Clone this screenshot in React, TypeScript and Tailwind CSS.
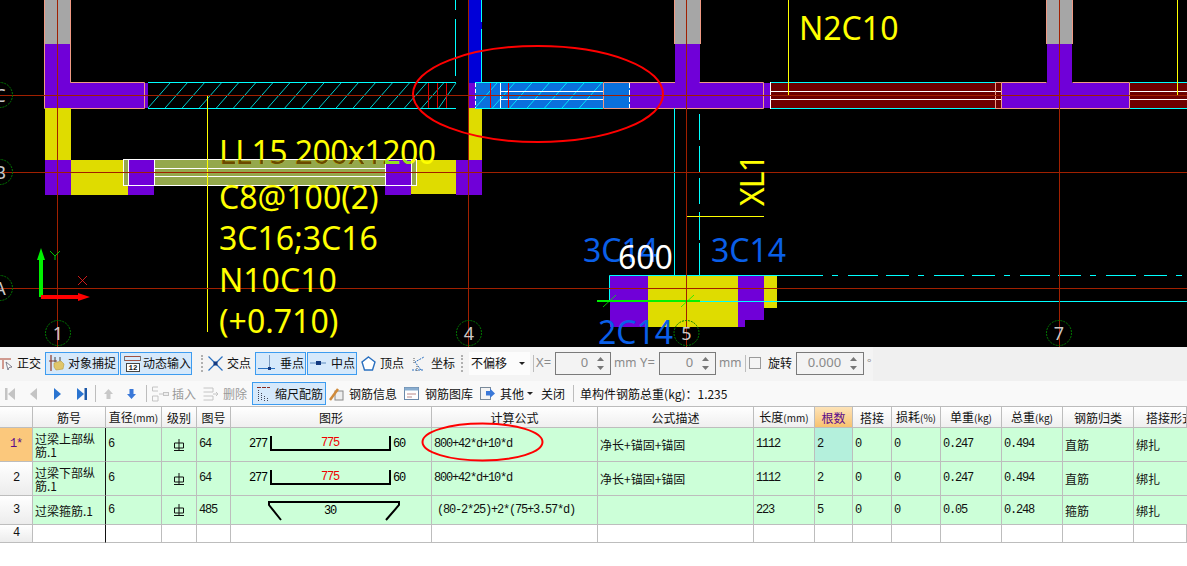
import React from 'react';

const CJK = '"Noto Sans CJK SC", "Noto Sans", sans-serif';
const RED = '#a02000';
const YELLOW = '#dfdc00';
const PURPLE = '#7000d8';
const SALMON = '#f09a84';
const CYAN = '#00ffff';
const MAROON = '#6e0000';

function range(start: number, end: number, step: number) {
  const out: number[] = [];
  for (let v = start; v < end; v += step) out.push(v);
  return out;
}

function AxisBubble({ cx, cy, label }: { cx: number; cy: number; label: string }) {
  return (
    <g>
      <circle cx={cx} cy={cy} r={12.5} fill="none" stroke="#007a00" strokeWidth={1} strokeDasharray="2 1" />
      <text x={cx} y={cy + 7} textAnchor="middle" fontSize={18} fill="#c8c8c8" fontFamily='"Noto Sans", sans-serif'>{label}</text>
    </g>
  );
}

function Column({ x, w }: { x: number; w: number }) {
  return (
    <g>
      <rect x={x} y={0} width={w} height={44} fill="#a6a6a6" />
      <rect x={x} y={44} width={w} height={40} fill={PURPLE} />
      <path d={`M${x - 0.5} 0V44M${x + w + 0.5} 0V44`} stroke={SALMON} fill="none" />
    </g>
  );
}

function Canvas() {
  const textFont = '"Noto Sans", sans-serif';
  const lines = ['C8@100(2)', '3C16;3C16', 'N10C10', '(+0.710)'];
  const baselines = [209, 250, 292, 333];
  return (
    <svg width={1187} height={347} viewBox="0 0 1187 347" className="block shrink-0">
      <rect width={1187} height={347} fill="#000" />
      <defs>
        <clipPath id="beamClip"><rect x={154} y={160} width={231} height={25} /></clipPath>
        <clipPath id="purpleClip"><rect x={385} y={160} width={26} height={6} /></clipPath>
      </defs>

      {/* column 1 and the wall under it */}
      <rect x={45} y={0} width={26} height={44} fill="#a6a6a6" />
      <rect x={45} y={44} width={26} height={64} fill={PURPLE} />
      <rect x={71} y={83} width={74} height={25} fill={PURPLE} />
      <path d="M44.5 0V108.5H144.5V82.5H70.5V0" fill="none" stroke={SALMON} />
      <rect x={145} y={83} width={3} height={25} fill={PURPLE} />
      <rect x={45} y={108} width={26} height={52} fill={YELLOW} />
      <rect x={45} y={160} width={26} height={35} fill={PURPLE} />
      <rect x={71} y={160} width={57} height={35} fill={YELLOW} />
      <rect x={128} y={160} width={26} height={35} fill={PURPLE} />
      <rect x={385} y={160} width={26} height={35} fill={PURPLE} />
      <rect x={411} y={160} width={45} height={34} fill={YELLOW} />
      <rect x={456} y={160} width={26} height={35} fill={PURPLE} />
      <rect x={469} y={108} width={13} height={52} fill={YELLOW} />

      {/* LL15 beam */}
      <rect x={124} y={160} width={4} height={25} fill="#94a84c" />
      <rect x={154} y={160} width={231} height={25} fill="#94a84c" />
      <rect x={411} y={160} width={6} height={25} fill="#94a84c" />
      <rect x={123.5} y={159.5} width={293} height={26} fill="none" stroke="#fff" />
      <path d="M128.5 160V185M154.5 160V185M385.5 160V185M411.5 160V185M154 168.5H385M154 176.5H385" stroke="#fff" />

      {/* hatched beam, column C */}
      <path d="M148 82.5H456M148 108.5H456" stroke={CYAN} />
      {range(148, 440, 17.1).map((x) => (
        <line key={x} x1={x} y1={108} x2={Math.min(x + 22, 456)} y2={83} stroke={CYAN} strokeWidth={0.8} />
      ))}
      <path d="M455.5 0V10M455.5 19V76" stroke={CYAN} strokeWidth={1} />
      <rect x={469} y={0} width={13} height={83} fill="#0000d8" />
      <path d="M481.5 0V22M481.5 29V83" stroke={CYAN} />
      <rect x={469} y={83} width={6} height={25} fill={PURPLE} />

      {/* selected beam */}
      <rect x={475} y={83} width={155} height={25} fill="#0a70dd" />
      <path d="M475 82.5H603M475 108.5H603" stroke={CYAN} />
      {range(475, 590, 17.4).map((x) => (
        <line key={x} x1={x} y1={108} x2={Math.min(x + 22, 603)} y2={83} stroke={CYAN} strokeWidth={0.8} />
      ))}
      <path d="M500.5 83V108M500 91.5H603M500 99.5H603" stroke="#fff" />
      <path d="M475.5 83V108" stroke="#fff" strokeDasharray="4 2" />
      <path d="M629.5 83V108" stroke="#fff" strokeDasharray="5 2" />
      <path d="M603.5 82.5H630M603.5 108.5H630M603.5 82.5V108.5" stroke={SALMON} fill="none" />
      <path d="M428.5 83V108M437.5 83V108M446.5 83V108M490.5 83V108M508.5 83V108" stroke="#e00000" />

      {/* T junction 4-5 */}
      <rect x={630} y={83} width={134} height={25} fill={PURPLE} />
      <Column x={675} w={25} />
      <path d="M630 108.5H763.5V82.5H699.5M675 82.5H630" fill="none" stroke={SALMON} />
      <rect x={764} y={83} width={6} height={25} fill={PURPLE} />

      {/* maroon beams */}
      <rect x={771} y={83} width={230} height={25} fill={MAROON} />
      <rect x={1130} y={83} width={57} height={25} fill={MAROON} />
      <path d="M770 82.5H996M770 108.5H996M1130 82.5H1187M1130 108.5H1187" stroke={CYAN} />
      <path d="M770.5 82V109" stroke="#fff" />
      <path d="M771 91.5H1001M771 99.5H1001M1130 91.5H1187M1130 99.5H1187" stroke="#fff" />
      <rect x={1002} y={83} width={128} height={25} fill={PURPLE} />
      <Column x={1047} w={25} />
      <path d="M995.5 82.5V108.5M1001.5 82.5H1046.5M1072.5 82.5H1129.5V108.5H995.5M995.5 82.5H1001.5V108.5" fill="none" stroke={SALMON} />

      {/* lower right footing */}
      <rect x={610} y={276} width={38} height={51} fill={PURPLE} />
      <rect x={648} y={276} width={90} height={51} fill={YELLOW} />
      <rect x={738} y={276} width={26} height={44} fill={PURPLE} />
      <rect x={738} y={320} width={7} height={7} fill={PURPLE} />
      <rect x={764} y={276} width={13} height={32} fill={YELLOW} />
      <path d="M609.5 275.5H800M609.5 275.5V301" stroke={CYAN} fill="none" />
      <path d="M800 275.5H1187" stroke={CYAN} strokeDasharray="23 9 6 10 30 8" />
      <path d="M700 301.5H1187" stroke={CYAN} />
      <path d="M674.5 108V275M699.5 114V140M699.5 146V172M699.5 178V204M699.5 212V240M699.5 243V275" stroke={CYAN} fill="none" />
      <path d="M597 301H700" stroke="#00f000" strokeWidth={2} />
      <path d="M603 307L616 295M681 307L694 295" stroke="#00f000" strokeWidth={0.8} />

      {/* leaders */}
      <path d="M207.5 96V332M788.5 0V95M1177.5 0V95M687 216.5H764" stroke="#ffff00" fill="none" />

      {/* grid */}
      <path d="M0 95.5H1187M0 172.5H1187M0 288.5H1187M57.5 0V347M468.5 0V347M686.5 0V347M1059.5 0V347" stroke={RED} fill="none" />

      <AxisBubble cx={0} cy={95} label="C" />
      <AxisBubble cx={0} cy={172} label="B" />
      <AxisBubble cx={0} cy={288} label="A" />
      <AxisBubble cx={58} cy={333} label="1" />
      <AxisBubble cx={469} cy={333} label="4" />
      <AxisBubble cx={686.5} cy={333} label="5" />
      <AxisBubble cx={1059} cy={333} label="7" />

      {/* origin arrows */}
      <path d="M41 297V256" stroke="#00f000" strokeWidth={4} />
      <path d="M41 248L45 260H37Z" fill="#00f000" />
      <path d="M41 297H82" stroke="#ff0000" strokeWidth={4} />
      <path d="M90 297L78 293V301Z" fill="#ff0000" />
      <path d="M50 251L55 256L60 251M55 256V260" stroke="#00f000" fill="none" strokeWidth={0.8} />
      <path d="M78 276L87 285M87 276L78 285" stroke="#ff2020" strokeWidth={0.8} />

      {/* labels */}
      <g fontFamily={textFont} fontSize={32}>
        <text x={219} y={164} fill="#ffff00" textLength={217}>LL15 200x1200</text>
        <text x={219} y={164} fill="#6a4a00" textLength={217} clipPath="url(#beamClip)">LL15 200x1200</text>
        <text x={219} y={164} fill="#90e020" textLength={217} clipPath="url(#purpleClip)">LL15 200x1200</text>
        {lines.map((t, i) => (
          <text key={t} x={219} y={baselines[i]} fill="#ffff00">{t}</text>
        ))}
        <text x={799} y={40} fill="#ffff00">N2C10</text>
        <text x={0} y={0} fill="#ffff00" textLength={52} transform="translate(764 206) rotate(-90)">XL1</text>
        <text x={583} y={262} fill="#0a5fe8">3C14</text>
        <text x={711} y={262} fill="#0a5fe8">3C14</text>
        <text x={598} y={344} fill="#0a5fe8">2C14</text>
        <text x={618} y={269} fill="#fff">600</text>
      </g>

      <ellipse cx={538} cy={94} rx={125} ry={48} fill="none" stroke="#ff0000" strokeWidth={2} />
    </svg>
  );
}

function ToolBtn({ w, children }: { w: string; children: React.ReactNode }) {
  return (
    <div className={`${w} h-[23px] flex items-center border border-[#3d9cf0] bg-[#d6e9fb]`}>{children}</div>
  );
}

const SnapIcon = () => (
  <svg width={16} height={18} viewBox="0 0 16 18" className="ml-[3px] shrink-0">
    <path d="M2 1V17M0 7H8" stroke="#8a3a2a" strokeWidth={1.2} />
    <path d="M6 3V8M11 3V7" stroke="#444" />
    <path d="M5 9L12 7L15 10L14 15L7 16L5 13Z" fill="#e0c66a" stroke="#b89a40" strokeWidth={0.6} />
  </svg>
);

const DynIcon = () => (
  <svg width={17} height={17} viewBox="0 0 17 17" className="ml-[3px] shrink-0">
    <path d="M0.5 1.5H16.5M0.5 5.5H16.5" stroke="#a05040" />
    <path d="M0.5 1V6M16.5 1V6" stroke="#777" />
    <rect x={2.5} y={8.5} width={13} height={8} fill="#fff" stroke="#444" />
    <text x={9} y={15} textAnchor="middle" fontSize={7.5} fontFamily='"Liberation Mono", monospace' fontWeight={700} fill="#222">12</text>
  </svg>
);

const SmallDots = () => (
  <div className="w-[2px] h-[17px] shrink-0 border-l-2 border-dotted border-[#b0b0b0]" />
);

function Sep() {
  return <div className="w-px h-[17px] shrink-0 bg-[#bdbdbd]" />;
}

function Spin({ w, value, ml }: { w: string; value: string; ml: string }) {
  return (
    <div className={`${w} ${ml} h-[23px] shrink-0 flex items-center justify-end border border-[#7a7a7a] bg-[#f3f3f3] text-[#8a8a8a]`}>
      <span className="text-[13px]" style={{ fontFamily: '"Noto Sans", sans-serif' }}>{value}</span>
      <svg width={9} height={17} viewBox="0 0 9 17" className="ml-[8px] mr-[5px] shrink-0">
        <path d="M4.5 2L8 6H1Z" fill="#777" />
        <path d="M4.5 15L8 11H1Z" fill="#777" />
      </svg>
    </div>
  );
}

function TopToolbar() {
  return (
    <div className="h-[34px] shrink-0 flex bg-[#f0f0f0]">
      <div className="w-[873px] flex items-center bg-[#f4f4f4] pb-[2px] text-[12px] text-[#111] whitespace-nowrap">
        <svg width={13} height={14} viewBox="0 0 13 14" className="shrink-0">
          <path d="M0 3H11M3 3V13" stroke="#d09a90" strokeWidth={2} fill="none" />
          <path d="M6 6L12 11L9 11.5L8 14Z" fill="#fff" stroke="#667" strokeWidth={0.8} />
        </svg>
        <span className="ml-[4px]">正交</span>
        <div className="ml-[4px]"><ToolBtn w="w-[74px]"><SnapIcon /><span className="ml-[3px]">对象捕捉</span></ToolBtn></div>
        <div className="ml-[1px]"><ToolBtn w="w-[72px]"><DynIcon /><span className="ml-[2px]">动态输入</span></ToolBtn></div>
        <div className="ml-[9px]"><SmallDots /></div>
        <svg width={15} height={15} viewBox="0 0 15 15" className="ml-[5px] shrink-0">
          <path d="M0.5 0.5L14.5 14.5M14.5 0.5L0.5 14.5" stroke="#2a70c0" strokeWidth={1.2} />
          <rect x={5.5} y={5.5} width={4} height={4} fill="#143a80" />
        </svg>
        <span className="ml-[4px]">交点</span>
        <div className="ml-[4px]">
          <ToolBtn w="w-[51px]">
            <svg width={17} height={16} viewBox="0 0 17 16" className="ml-[2px] shrink-0">
              <path d="M0 13.5H17" stroke="#2a70c0" /><path d="M11.5 0V13" stroke="#7a9ac0" />
              <rect x={10} y={12} width={3} height={3} fill="#143a80" />
            </svg>
            <span className="ml-[5px]">垂点</span>
          </ToolBtn>
        </div>
        <div className="ml-px">
          <ToolBtn w="w-[50px]">
            <svg width={16} height={6} viewBox="0 0 16 6" className="ml-[2px] shrink-0">
              <path d="M0 3H16" stroke="#5a8ac0" /><rect x={6} y={1} width={5} height={4} fill="#143a80" />
            </svg>
            <span className="ml-[5px]">中点</span>
          </ToolBtn>
        </div>
        <svg width={15} height={15} viewBox="0 0 15 15" className="ml-[4px] shrink-0">
          <path d="M7.5 1L14 6L11.5 14H3.5L1 6Z" fill="#fff" stroke="#2a70c0" strokeWidth={1.4} />
        </svg>
        <span className="ml-[4px]">顶点</span>
        <svg width={15} height={17} viewBox="0 0 15 17" className="ml-[7px] shrink-0">
          <path d="M1 15H12M10 15L4 7L13 2" stroke="#2a70c0" fill="none" strokeDasharray="2 1" />
          <path d="M3 3V8M6 11V16" stroke="#555" strokeDasharray="1 1" />
        </svg>
        <span className="ml-[5px]">坐标</span>
        <div className="ml-[6px]"><SmallDots /></div>
        <div className="ml-[6px] w-[61px] h-[23px] flex items-center justify-between bg-[#fcfcfc] px-[2px]">
          <span>不偏移</span>
          <span className="w-0 h-0 border-x-[3px] border-x-transparent border-t-[3px] border-t-[#222] mr-[3px]" />
        </div>
        <div className="ml-[3px]"><Sep /></div>
        <span className="ml-[2px] text-[#8a8a8a] text-[13px] w-[17px]" style={{ fontFamily: '"Noto Sans", sans-serif' }}>X=</span>
        <Spin w="w-[56px]" ml="ml-[2px]" value="0" />
        <span className="ml-[3px] text-[#8a8a8a] text-[12px] w-[26px]" style={{ fontFamily: '"Noto Sans", sans-serif' }}>mm</span>
        <span className="text-[#8a8a8a] text-[13px] w-[17px]" style={{ fontFamily: '"Noto Sans", sans-serif' }}>Y=</span>
        <Spin w="w-[57px]" ml="ml-[2px]" value="0" />
        <span className="ml-[3px] text-[#8a8a8a] text-[12px] w-[26px]" style={{ fontFamily: '"Noto Sans", sans-serif' }}>mm</span>
        <Sep />
        <div className="ml-[3px] w-[12px] h-[12px] shrink-0 border border-[#9a9a9a] bg-[#f4f4f4]" />
        <span className="ml-[7px]">旋转</span>
        <Spin w="w-[68px]" ml="ml-[4px]" value="0.000" />
        <span className="ml-[3px] text-[#8a8a8a]">°</span>
      </div>
    </div>
  );
}

function BottomToolbar() {
  return (
    <div className="h-[26px] shrink-0 flex items-center bg-[#f9f9f9] text-[12px] text-[#111] border-b border-[#bcbcbc]">
      <svg width={10} height={12} viewBox="0 0 10 12" className="ml-[5px] shrink-0">
        <rect x={0} y={0} width={2.5} height={12} fill="#c4c4c4" /><path d="M10 0V12L3 6Z" fill="#c4c4c4" />
      </svg>
      <svg width={7} height={12} viewBox="0 0 7 12" className="ml-[15px] shrink-0"><path d="M7 0V12L0 6Z" fill="#c4c4c4" /></svg>
      <svg width={7} height={12} viewBox="0 0 7 12" className="ml-[17px] shrink-0"><path d="M0 0V12L7 6Z" fill="#2a74d0" /></svg>
      <svg width={10} height={12} viewBox="0 0 10 12" className="ml-[16px] shrink-0">
        <path d="M0 0V12L7 6Z" fill="#2a74d0" /><rect x={7.5} y={0} width={2.5} height={12} fill="#1c58a8" />
      </svg>
      <div className="ml-[8px]"><Sep /></div>
      <svg width={9} height={10} viewBox="0 0 9 10" className="ml-[8px] shrink-0"><path d="M4.5 0L9 5H6.5V10H2.5V5H0Z" fill="#c8c8c8" /></svg>
      <svg width={9} height={10} viewBox="0 0 9 10" className="ml-[14px] shrink-0"><path d="M4.5 10L9 5H6.5V0H2.5V5H0Z" fill="#3a78d8" /></svg>
      <div className="ml-[10px]"><Sep /></div>
      <svg width={17} height={16} viewBox="0 0 17 16" className="ml-[5px] shrink-0">
        <path d="M0.5 1H6M0.5 1V5H6M0.5 10H6V15H0.5Z" fill="none" stroke="#c4c4c4" />
        <path d="M7 8H11" stroke="#c4c4c4" /><rect x={11.5} y={6.5} width={5} height={3} fill="#eee" stroke="#c4c4c4" />
      </svg>
      <span className="ml-[3px] text-[#999]">插入</span>
      <svg width={16} height={14} viewBox="0 0 16 14" className="ml-[7px] shrink-0">
        <path d="M0.5 1H10V5H0.5M0.5 9H10V13H0.5" fill="none" stroke="#c4c4c4" /><path d="M10 7H15M13 5L15 7L13 9" stroke="#c4c4c4" fill="none" />
      </svg>
      <span className="ml-[4px] text-[#999]">删除</span>
      <div className="ml-[5px] w-[74px] h-[23px] flex items-center border border-[#3d9cf0] bg-[#d6e9fb]">
        <svg width={13} height={15} viewBox="0 0 13 15" className="ml-[4px] shrink-0">
          <path d="M0 1.5H13" stroke="#8a2a20" strokeDasharray="4 1" />
          <path d="M1.5 4V15M4.5 7V15M7.5 10V15M10.5 12V15" stroke="#445" strokeDasharray="1 1" />
        </svg>
        <span className="ml-[5px]">缩尺配筋</span>
      </div>
      <svg width={15} height={14} viewBox="0 0 15 14" className="ml-[3px] shrink-0">
        <rect x={6} y={4} width={8} height={9} fill="#eee" stroke="#888" /><path d="M1 13L9 2" stroke="#d08a3a" strokeWidth={2.5} />
      </svg>
      <span className="ml-[5px]">钢筋信息</span>
      <svg width={15} height={13} viewBox="0 0 15 13" className="ml-[7px] shrink-0">
        <rect x={0.5} y={0.5} width={14} height={12} fill="#fff" stroke="#6a88aa" /><rect x={0.5} y={0.5} width={14} height={3} fill="#8aaed0" />
        <path d="M3 7H12M3 10H8" stroke="#b88" />
      </svg>
      <span className="ml-[6px]">钢筋图库</span>
      <svg width={15} height={13} viewBox="0 0 15 13" className="ml-[7px] shrink-0">
        <rect x={0.5} y={0.5} width={10} height={12} fill="#f4f4f4" stroke="#7a8a9a" /><path d="M6 4H10V1.5L15 6.5L10 11V8.5H6Z" fill="#3a78d8" />
      </svg>
      <span className="ml-[5px]">其他</span>
      <span className="ml-[3px] w-0 h-0 border-x-[3px] border-x-transparent border-t-[3px] border-t-[#222]" />
      <span className="ml-[8px]">关闭</span>
      <div className="ml-[8px]"><Sep /></div>
      <span className="ml-[6px] whitespace-nowrap">单构件钢筋总重(kg)：1.235</span>
    </div>
  );
}

function Unit({ label, unit }: { label: string; unit: string }) {
  return (
    <span className="whitespace-nowrap">
      {label}<span className="text-[10px]">({unit})</span>
    </span>
  );
}

const headers: React.ReactNode[] = [
  '',
  '筋号',
  <Unit key="d" label="直径" unit="mm" />,
  '级别',
  '图号',
  '图形',
  '计算公式',
  '公式描述',
  <Unit key="l" label="长度" unit="mm" />,
  '根数',
  '搭接',
  <Unit key="s" label="损耗" unit="%" />,
  <Unit key="u" label="单重" unit="kg" />,
  <Unit key="t" label="总重" unit="kg" />,
  '钢筋归类',
  '搭接形式',
];

function Num({ children }: { children: React.ReactNode }) {
  return (
    <span className="text-[12px] tracking-[-1.2px] whitespace-nowrap" style={{ fontFamily: '"Liberation Mono", monospace' }}>{children}</span>
  );
}

function BarShape({ top, bottom }: { top: string; bottom: string }) {
  const mono = '"Liberation Mono", monospace';
  return (
    <svg width={200} height={33} viewBox="0 0 200 33" className="block">
      <text x={18} y={19} fontSize={12} letterSpacing={-1.2} fontFamily={mono} fill="#000">{top}</text>
      <path d="M40 8V22H159V8" fill="none" stroke="#000" strokeWidth={2} />
      <text x={99} y={18} textAnchor="middle" fontSize={12} letterSpacing={-1.2} fontFamily={mono} fill="#f00000">775</text>
      <text x={162} y={19} fontSize={12} letterSpacing={-1.2} fontFamily={mono} fill="#000">{bottom}</text>
    </svg>
  );
}

function StirrupShape() {
  return (
    <svg width={200} height={28} viewBox="0 0 200 28" className="block">
      <path d="M50 24L38 9V6H168V9L155 24" fill="none" stroke="#000" strokeWidth={2} />
      <text x={99} y={18} textAnchor="middle" fontSize={12} letterSpacing={-1.2} fontFamily='"Liberation Mono", monospace' fill="#000">30</text>
    </svg>
  );
}

type Row = {
  no: string;
  active?: boolean;
  name: string;
  code: string;
  shape: React.ReactNode;
  formula: string;
  formulaPad?: boolean;
  desc: string;
  len: string;
  count: string;
  unit: string;
  total: string;
  kind: string;
  h: string;
};

const rows: Row[] = [
  { no: '1*', active: true, name: '过梁上部纵筋.1', code: '64', shape: <BarShape top="277" bottom="60" />, formula: '800+42*d+10*d', desc: '净长+锚固+锚固', len: '1112', count: '2', unit: '0.247', total: '0.494', kind: '直筋', h: 'h-[34px]' },
  { no: '2', name: '过梁下部纵筋.1', code: '64', shape: <BarShape top="277" bottom="60" />, formula: '800+42*d+10*d', desc: '净长+锚固+锚固', len: '1112', count: '2', unit: '0.247', total: '0.494', kind: '直筋', h: 'h-[34px]' },
  { no: '3', name: '过梁箍筋.1', code: '485', shape: <StirrupShape />, formula: '(80-2*25)+2*(75+3.57*d)', formulaPad: true, desc: '', len: '223', count: '5', unit: '0.05', total: '0.248', kind: '箍筋', h: 'h-[29px]' },
];

const gridCols = 'grid grid-cols-[33px_73px_56px_35px_34px_201px_166px_156px_61px_38px_39px_49px_61px_61px_71px_53px]';
const cell = 'border-r border-b border-[#bdbdbd] flex items-center overflow-hidden';

function RebarTable() {
  return (
    <div className="w-[1187px] bg-white text-[12px] text-[#111] leading-[13px]">
      <div className={`${gridCols} h-[21px]`}>
        {headers.map((h, i) => (
          <div
            key={i}
            className={`${cell} whitespace-nowrap ${i === 15 ? 'justify-start pl-[12px]' : 'justify-center'} ${i === 9 ? 'bg-gradient-to-b from-[#fde3b8] to-[#f8c26e] text-[#5a0a8a]' : 'bg-gradient-to-b from-white to-[#efefef]'}`}
          >
            {h}
          </div>
        ))}
      </div>
      {rows.map((r, ri) => (
        <div key={r.no} className={`${gridCols} ${r.h}`}>
          <div className={`${cell} justify-center ${r.active ? 'bg-[#fbc87c] text-[#5a0a8a]' : 'bg-gradient-to-b from-white to-[#ececec]'}`}><Num>{r.no}</Num></div>
          <div className={`${cell} bg-[#ccffd8] pl-[2px] border-r-[#111]`}><span className="leading-[13px]">{r.name}</span></div>
          <div className={`${cell} bg-[#ccffd8] pl-[2px]`}><Num>6</Num></div>
          <div className={`${cell} bg-[#ccffd8] justify-center`}>
            <svg width={10} height={12} viewBox="0 0 10 12">
              <path d="M5 0V12M0.5 4H9.5V9H0.5ZM0 11.5H10" stroke="#111" fill="none" />
            </svg>
          </div>
          <div className={`${cell} bg-[#ccffd8] pl-[2px]`}><Num>{r.code}</Num></div>
          <div className={`${cell} bg-[#ccffd8]`}>{r.shape}</div>
          <div className={`${cell} bg-[#ccffd8] ${r.formulaPad ? 'pl-[5px]' : 'pl-[2px]'}`}><Num>{r.formula}</Num></div>
          <div className={`${cell} bg-[#ccffd8] pl-[2px]`}>{r.desc}</div>
          <div className={`${cell} bg-[#ccffd8] pl-[2px]`}><Num>{r.len}</Num></div>
          <div className={`${cell} pl-[2px] ${ri === 0 ? 'bg-[#b4f0dc]' : 'bg-[#ccffd8]'}`}><Num>{r.count}</Num></div>
          <div className={`${cell} bg-[#ccffd8] pl-[2px]`}><Num>0</Num></div>
          <div className={`${cell} bg-[#ccffd8] pl-[2px]`}><Num>0</Num></div>
          <div className={`${cell} bg-[#ccffd8] pl-[2px]`}><Num>{r.unit}</Num></div>
          <div className={`${cell} bg-[#ccffd8] pl-[2px]`}><Num>{r.total}</Num></div>
          <div className={`${cell} bg-[#ccffd8] pl-[2px]`}>{r.kind}</div>
          <div className={`${cell} bg-[#ccffd8] pl-[2px] border-r-0`}>绑扎</div>
        </div>
      ))}
      <div className={`${gridCols} h-[18px]`}>
        {headers.map((_, i) => (
          <div key={i} className={`${cell} ${i === 0 ? 'justify-center bg-gradient-to-b from-white to-[#ececec]' : ''} ${i === 1 ? 'border-r-[#111]' : ''}`}>
            {i === 0 && <Num>4</Num>}
          </div>
        ))}
      </div>
    </div>
  );
}

export default function App() {
  return (
    <div className="relative w-[1187px] h-[566px] flex flex-col bg-white overflow-hidden" style={{ fontFamily: CJK }}>
      <Canvas />
      <TopToolbar />
      <BottomToolbar />
      <RebarTable />
      {/* hand drawn mark over the formula cell */}
      <svg width={126} height={44} viewBox="0 0 126 44" className="absolute left-[420px] top-[421px]">
        <ellipse cx={62.5} cy={21} rx={60} ry={18.5} fill="none" stroke="#ff0000" strokeWidth={2} />
      </svg>
    </div>
  );
}
